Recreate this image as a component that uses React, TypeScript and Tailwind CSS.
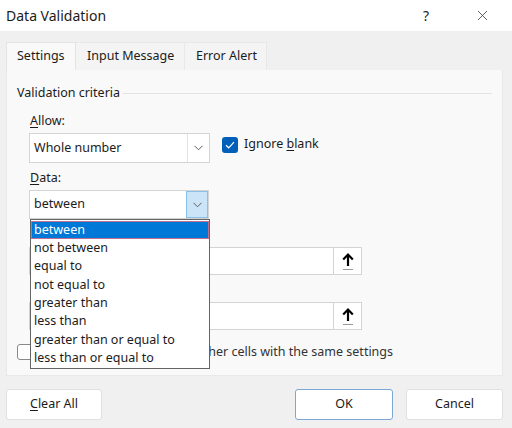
import { X } from 'lucide-react';

const options = [
  'between',
  'not between',
  'equal to',
  'not equal to',
  'greater than',
  'less than',
  'greater than or equal to',
  'less than or equal to',
];

const Chevron = () => (
  <svg width="9" height="6" viewBox="0 0 9 6" fill="none">
    <path d="M0.5 0.8 4.5 4.8 8.5 0.8" stroke="#5f5f5f" strokeWidth="1" />
  </svg>
);

const RefButton = () => (
  <div className="w-[28px] h-full bg-white border-l border-[#d4d4d4] flex items-center justify-center">
    <svg width="14" height="20" viewBox="0 0 14 20" fill="none">
      <path d="M7 4v11" stroke="#000" strokeWidth="2.2" />
      <path d="M2.2 8.6 7 3.6l4.8 5" stroke="#000" strokeWidth="2.2" />
      <path d="M2 18.5h10" stroke="#9a9a9a" strokeWidth="1" />
    </svg>
  </div>
);

const App = () => {
  return (
    <div className="w-[512px] h-[428px] bg-[#f0f0f0] flex flex-col text-[12.5px] text-[#1b1b1b] font-['Noto_Sans',sans-serif] overflow-hidden">
      {/* title bar */}
      <div className="h-[31px] bg-white flex items-center pl-[6px] shrink-0">
        <span className="text-[14px] flex-1">Data Validation</span>
        <span className="text-[14px] w-[20px] mr-[38px] text-center">?</span>
        <X size={17} strokeWidth={1.1} className="mr-[21px] text-[#333]" />
      </div>

      {/* tabs */}
      <div className="flex ml-[6px] mt-[11px] h-[28px] shrink-0">
        <div className="w-[70px] bg-[#f9f9f9] border border-b-0 border-[#e3e3e3] flex items-center pl-[10px]">
          Settings
        </div>
        <div className="w-[109px] bg-[#f4f4f4] border-t border-r border-[#e8e8e8] flex items-center pl-[11px]">
          Input Message
        </div>
        <div className="w-[82px] bg-[#f4f4f4] border-t border-r border-[#e8e8e8] flex items-center pl-[11px]">
          Error Alert
        </div>
      </div>

      {/* panel */}
      <div className="ml-[6px] mr-[9px] h-[306px] bg-[#f9f9f9] border border-t-0 border-[#e8e8e8] relative shrink-0">
        <div className="flex items-center pl-[10px] pr-[10px] mt-[14px] h-[18px]">
          <span>Validation criteria</span>
          <div className="flex-1 h-px bg-[#e3e3e3] ml-[3px]" />
        </div>

        <div className="ml-[22px] mt-[10px]">
          <div className="h-[18px] flex items-center pl-[1px]">
            <span>
              <span className="underline underline-offset-2">A</span>llow:
            </span>
          </div>
          <div className="flex items-center mt-[3px]">
            <div className="w-[181px] h-[30px] bg-white border border-[#d4d4d4] flex">
              <div className="flex-1 flex items-center pl-[4px]">Whole number</div>
              <div className="w-[22px] border-l border-[#e2e2e2] flex items-center justify-center">
                <Chevron />
              </div>
            </div>
            <div className="ml-[12px] mb-[7px] flex items-center">
              <div className="w-[16px] h-[16px] rounded-[3px] bg-[#005fb8] flex items-center justify-center">
                <svg width="10" height="8" viewBox="0 0 10 8" fill="none">
                  <path d="M1 4.2 3.7 6.8 9 1.2" stroke="#fff" strokeWidth="1.2" />
                </svg>
              </div>
              <span className="ml-[6px]">
                Ignore <span className="underline underline-offset-2">b</span>lank
              </span>
            </div>
          </div>

          <div className="h-[18px] flex items-center pl-[1px] mt-[6px]">
            <span>
              <span className="underline underline-offset-2">D</span>ata:
            </span>
          </div>
          <div className="relative mt-[3px] w-[180px]">
            <div className="w-[180px] h-[29px] bg-white border border-[#d4d4d4] flex">
              <div className="flex-1 flex items-center pl-[4px]">between</div>
              <div className="w-[22px] bg-[#cce4f7] border border-[#8cbfe6] flex items-center justify-center">
                <Chevron />
              </div>
            </div>

            {/* open dropdown list */}
            <div className="absolute left-[1px] top-[29px] w-[180px] bg-white border border-[#646464] z-10 py-[1px]">
              {options.map((o, i) => (
                <div
                  key={o}
                  className={
                    i === 0
                      ? 'h-[18.3px] flex items-center pl-[2px] bg-[#0078d7] text-white border border-[#c0708f]'
                      : 'h-[18.3px] flex items-center pl-[3px]'
                  }
                >
                  {o}
                </div>
              ))}
            </div>
          </div>

          {/* minimum (label hidden behind the open list) */}
          <div className="h-[18px] mt-[6px]" />
          <div className="w-[333px] h-[28px] bg-white border border-[#d4d4d4] flex justify-end mt-[4px]">
            <RefButton />
          </div>

          {/* maximum */}
          <div className="h-[18px] mt-[5px]" />
          <div className="w-[333px] h-[28px] bg-white border border-[#d4d4d4] flex justify-end mt-[4px]">
            <RefButton />
          </div>
        </div>

        <div className="flex items-center ml-[10px] mt-[13px]">
          <div className="w-[16px] h-[16px] rounded-[3px] bg-white border border-[#8a8a8a]" />
          <span className="ml-[7px] text-[#333]">
            Apply these changes to all other cells with the same settings
          </span>
        </div>
      </div>

      {/* buttons */}
      <div className="flex pl-[6px] pr-[9px] mt-[13px] h-[31px] shrink-0">
        <button className="w-[96px] h-full bg-white border border-[#e0e0e0] rounded-[3px] text-[#1b1b1b]">
          <span className="underline underline-offset-2">C</span>lear All
        </button>
        <div className="flex-1" />
        <button className="w-[98px] h-full bg-white border border-[#7ba7d6] rounded-[3px] text-[#1b1b1b]">
          OK
        </button>
        <button className="w-[97px] h-full ml-[13px] bg-white border border-[#e0e0e0] rounded-[3px] text-[#1b1b1b]">
          Cancel
        </button>
      </div>
    </div>
  );
};

export default App;
